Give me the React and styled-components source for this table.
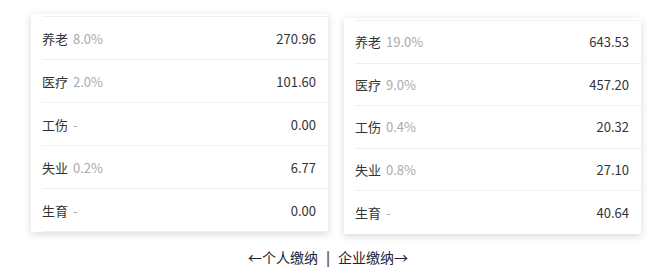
import React from "react";
import styled, { createGlobalStyle } from "styled-components";

const GlobalStyle = createGlobalStyle`
  body {
    margin: 0;
    background: #fff;
    font-family: "Noto Sans CJK SC", "Noto Sans", sans-serif;
  }
`;

const Page = styled.div`
  width: 672px;
  padding-top: 14px;
  display: flex;
  flex-direction: column;
  align-items: center;
`;

const Cards = styled.div`
  display: flex;
  gap: 16px;
  align-items: flex-start;
`;

const Card = styled.div`
  width: 297px;
  margin-top: ${(p) => p.$offset || 0}px;
  padding: 2px 0 ${(p) => (p.$closed ? 0 : 1)}px;
  background: #fff;
  box-shadow: 0 2px 8px rgba(0, 0, 0, 0.16);
`;

const Row = styled.div`
  display: flex;
  align-items: center;
  justify-content: space-between;
  height: ${(p) => p.$height}px;
  margin-left: 11px;
  padding-right: 12px;
  border-top: 1px solid #f0f0f0;
  font-size: 13px;

  &:last-child {
    border-bottom: ${(p) => (p.$closed ? "1px solid #f0f0f0" : "none")};
  }
`;

const Label = styled.span`
  color: #333;
`;

const Rate = styled.span`
  color: #aaa;
  margin-left: 5px;
`;

const Amount = styled.span`
  color: #333;
`;

const Switch = styled.div`
  margin-top: 13px;
  margin-right: 16px;
  font-size: 14px;
  line-height: 20px;
  color: #1c2333;

  b {
    font-weight: 700;
    color: #7a4a1e;
    margin: 0 8px;
  }
`;

const personal = [
  ["养老", "8.0%", "270.96"],
  ["医疗", "2.0%", "101.60"],
  ["工伤", "-", "0.00"],
  ["失业", "0.2%", "6.77"],
  ["生育", "-", "0.00"],
];

const company = [
  ["养老", "19.0%", "643.53"],
  ["医疗", "9.0%", "457.20"],
  ["工伤", "0.4%", "20.32"],
  ["失业", "0.8%", "27.10"],
  ["生育", "-", "40.64"],
];

function Table({ data, rowHeight, offset, closed }) {
  return (
    <Card $offset={offset} $closed={closed}>
      {data.map(([name, rate, amount]) => (
        <Row key={name} $height={rowHeight} $closed={closed}>
          <span>
            <Label>{name}</Label>
            <Rate>{rate}</Rate>
          </span>
          <Amount>{amount}</Amount>
        </Row>
      ))}
    </Card>
  );
}

export default function App() {
  return (
    <>
      <GlobalStyle />
      <Page>
        <Cards>
          <Table data={personal} rowHeight={42} closed />
          <Table data={company} rowHeight={41.6} offset={4} />
        </Cards>
        <Switch>
          ←个人缴纳<b>|</b>企业缴纳→
        </Switch>
      </Page>
    </>
  );
}
